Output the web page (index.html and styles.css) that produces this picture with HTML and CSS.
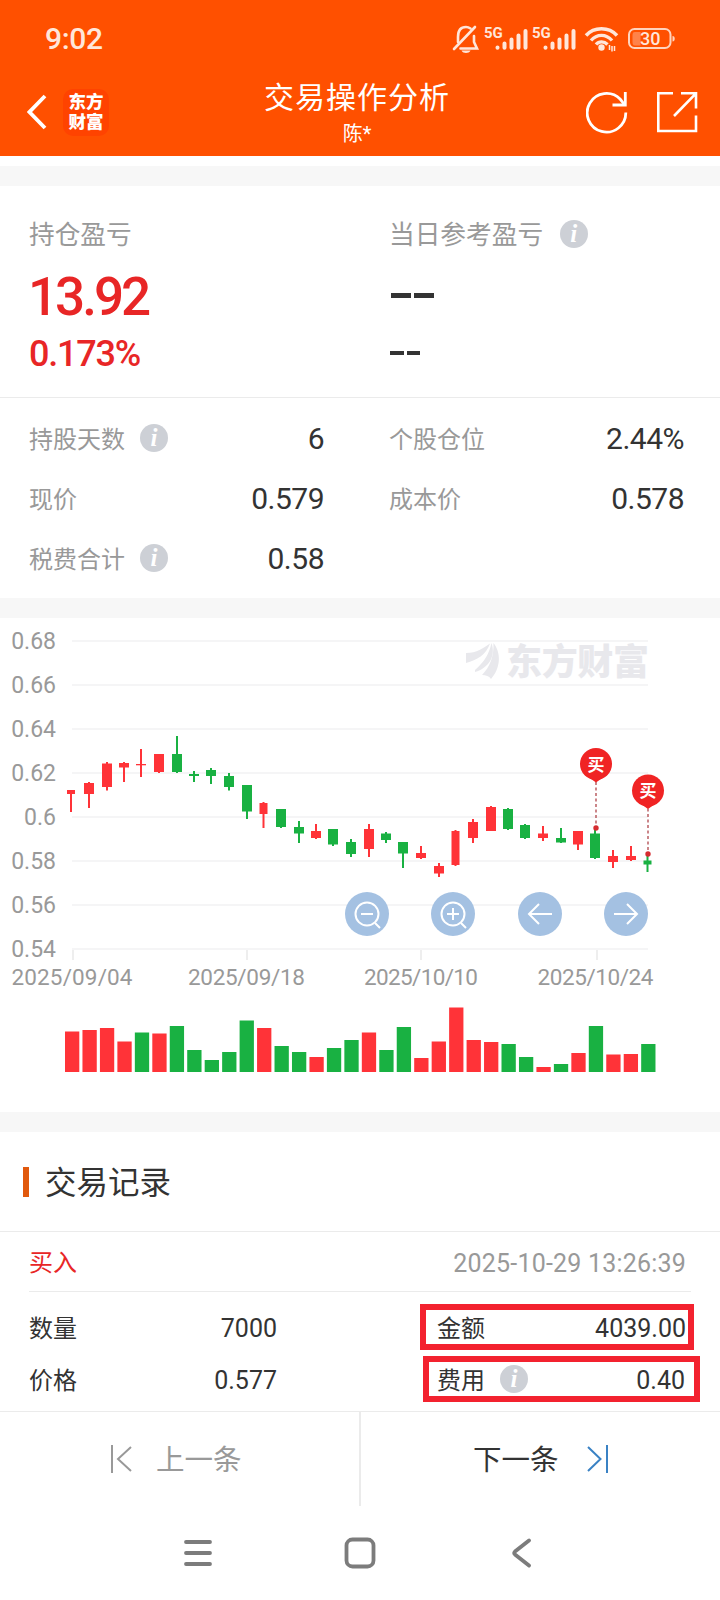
FILE: index.html
```html
<!DOCTYPE html>
<html lang="zh-CN">
<head>
  <meta charset="UTF-8">
  <meta name="viewport" content="width=device-width, initial-scale=1.0">
  <title>交易操作分析</title>
  <link rel="stylesheet" href="styles.css">
</head>
<body>
  <!-- Header -->
  <header class="header">
    <div class="status-bar">
      <span class="time">9:02</span>
      <svg class="status-icons" width="228" height="36" viewBox="450 22 228 36">
        <g fill="none" stroke="#ffe6da" stroke-width="2.6" stroke-linecap="round">
          <path d="M454 49 L475 27"/>
          <path d="M458 42 V37 C458 30 461 27 466 27 C468 27 469 27.500 470.500 28.500"/>
          <path d="M474 36 V42 L477 48.500 H460.500"/>
        </g>
        <path d="M461.500 50.500 H470.500 C469.500 52.300 468 53 466 53 C464 53 462.500 52.300 461.500 50.500 Z" fill="#ffe6da"/>
        <text class="net" x="484" y="37.500">5G</text>
        <g stroke="#ffe6da" stroke-width="4" stroke-linecap="round">
          <path d="M497.500 47.500 V47.700 M504.500 43.500 V47.700 M511.500 39.500 V47.700 M518.500 35.500 V47.700 M525.500 31 V47.700"/>
          <path d="M545.500 47.500 V47.700 M552.500 43.500 V47.700 M559.500 39.500 V47.700 M566.500 35.500 V47.700 M573.500 31 V47.700"/>
        </g>
        <text class="net" x="532" y="37.500">5G</text>
        <g fill="none" stroke="#ffe6da" stroke-width="3.400">
          <path d="M586 35.500 C594 26.500 609 26.500 617 35.500"/>
          <path d="M591 40.500 C597 33.700 606 33.700 612 40.500"/>
          <path d="M596 44.500 C599 41 604 41 607.500 44.500"/>
        </g>
        <circle cx="601.500" cy="47.500" r="3.200" fill="#ffe6da"/>
        <path d="M609.500 50 V45 M612 46 V51.500 M614.500 51 V46" stroke="#ffe6da" stroke-width="1.500"/>
        <rect x="629" y="29" width="41.500" height="19" rx="5.500" fill="none" stroke="#ffd3bd" stroke-width="2"/>
        <path d="M635 32 H640.500 V45.500 H635 C633 45.500 632.500 44 632.500 42 V35.500 C632.500 33 633 32 635 32 Z" fill="#ff824a"/>
        <path d="M672.500 36 C675.500 36 675.500 41.500 672.500 41.500 Z" fill="#ffd3bd"/>
        <text class="battery" x="640" y="45">30</text>
      </svg>
    </div>
    <div class="title-bar">
      <div class="title-left">
        <svg width="20" height="36" viewBox="0 0 20 36"><path d="M18 2 L2.500 18 L18 34" fill="none" stroke="#fff" stroke-width="3.800"/></svg>
        <div class="logo">东方<br>财富</div>
      </div>
      <div class="title-center">
        <h1>交易操作分析</h1>
        <p>陈*</p>
      </div>
      <div class="title-right">
        <svg width="42" height="44" viewBox="0 0 42 44" fill="none" stroke="#fff" stroke-width="2.800">
          <path d="M39.800 22.500 A19.300 19.300 0 1 1 34.300 9.300 L38 14"/>
          <path d="M39.300 2 V15 H26.500"/>
        </svg>
        <svg width="42" height="44" viewBox="0 0 42 44" fill="none" stroke="#fff" stroke-width="2.600">
          <path d="M17 3.300 H2.300 V41 H40 V25.500"/>
          <path d="M25 3.300 H40 V18.500 M39 4.300 L18 26"/>
        </svg>
      </div>
    </div>
  </header>

  <!-- Profit and loss -->
  <section class="profit">
    <div class="profit-col">
      <div class="profit-label"><span>持仓盈亏</span></div>
      <div class="profit-value up">13.92</div>
      <div class="profit-rate up">0.173%</div>
    </div>
    <div class="profit-col">
      <div class="profit-label"><span>当日参考盈亏</span><i class="info">i</i></div>
      <div class="dashes"><b></b><b></b></div>
      <div class="dashes small"><b></b><b></b></div>
    </div>
  </section>

  <!-- Position details -->
  <section class="details">
    <div class="item"><span>持股天数</span><i class="info">i</i><strong>6</strong></div>
    <div class="item"><span>个股仓位</span><strong>2.44%</strong></div>
    <div class="item"><span>现价</span><strong>0.579</strong></div>
    <div class="item"><span>成本价</span><strong>0.578</strong></div>
    <div class="item"><span>税费合计</span><i class="info">i</i><strong>0.58</strong></div>
  </section>

  <!-- Candles and volume -->
  <section class="chart">
    <svg id="kline" width="720" height="494" viewBox="0 618 720 494">
      <g id="axis"></g>
      <g class="watermark">
        <path d="M466 653 C477 653 483 648 490 643.500 C486 655 477 660 466 663 Z"/>
        <path d="M475 670 C485 661 489 654 491.500 643 C496 656 489 668 475 672 Z"/>
        <path d="M482 675 C490 667 494 656 493.500 643 C502 654 500 669 491 679 C489 676 486 675 482 675 Z"/>
        <text x="506" y="675" textLength="143">东方财富</text>
      </g>
      <g id="candles"></g>
      <g id="pins"></g>
      <g id="volume"></g>
    </svg>
    <div class="chart-tools">
      <button type="button"><svg width="44" height="44"><circle cx="22" cy="22" r="11.500"/><path d="M16 22 H28 M30 31 L35 36"/></svg></button>
      <button type="button"><svg width="44" height="44"><circle cx="22" cy="22" r="11.500"/><path d="M16 22 H28 M22 16 V28 M30 31 L35 36"/></svg></button>
      <button type="button"><svg width="44" height="44"><path d="M34 22 H11 M21 12 L11 22 L21 32"/></svg></button>
      <button type="button"><svg width="44" height="44"><path d="M10 22 H33 M23 12 L33 22 L23 32"/></svg></button>
    </div>
  </section>

  <!-- Trade records -->
  <section class="records">
    <h2><span>交易记录</span></h2>
    <div class="record-head">
      <span class="up">买入</span>
      <time>2025-10-29 13:26:39</time>
    </div>
    <div class="record-body">
      <div class="cell"><span>数量</span><strong>7000</strong></div>
      <div class="cell marked"><span>金额</span><strong>4039.00</strong></div>
      <div class="cell"><span>价格</span><strong>0.577</strong></div>
      <div class="cell marked wide"><span>费用</span><i class="info">i</i><strong>0.40</strong></div>
    </div>
  </section>

  <!-- Pager -->
  <div class="pager">
    <div class="prev">
      <svg width="24" height="30" viewBox="0 0 24 30"><path d="M2 1 V29 M21 3 L8 15 L21 27"/></svg>
      <span>上一条</span>
    </div>
    <div class="next">
      <span>下一条</span>
      <svg width="24" height="30" viewBox="0 0 24 30"><path d="M22 1 V29 M3 3 L15.500 15 L3 27"/></svg>
    </div>
  </div>

  <!-- System navigation -->
  <nav class="sys-nav">
    <svg width="30" height="32"><path d="M3 5 H27 M3 16 H27 M3 27 H27"/></svg>
    <svg width="32" height="32"><rect x="2.500" y="2.500" width="27" height="27" rx="6"/></svg>
    <svg width="22" height="32"><path d="M18 3.500 L4 14.500 Q2.500 16 4 17.500 L18 28.500"/></svg>
  </nav>

  <script>
    const RED = '#ff3338';
    const GREEN = '#19b142';

    // [x, wick top, body top, body bottom, wick bottom, color]
    const candles = [
      [71, 790, 790, 794, 812, RED], [89, 782, 783, 794, 808, RED],
      [107, 762, 763.5, 787, 790.5, RED], [124, 762, 763, 767.5, 782, RED],
      [141, 749, 764, 765.3, 777, RED], [159, 754, 754, 772, 773, RED],
      [177, 736, 754, 772, 773, GREEN], [194, 771, 774, 776, 782, GREEN],
      [211, 768, 770, 776, 784, GREEN], [229, 773, 776, 787, 790.5, GREEN],
      [247, 785, 785, 811.5, 819, GREEN], [263.5, 802, 803, 814, 828, RED],
      [281, 809, 809, 827, 828, GREEN], [299, 821, 827, 833.5, 843, GREEN],
      [316, 824, 831, 838, 839, RED], [333, 829, 829, 844.5, 846, GREEN],
      [351, 839, 842, 854, 857, GREEN], [369, 824, 829, 849, 857, RED],
      [386, 832, 833.5, 840, 843, GREEN], [403, 842, 842, 853.5, 868, GREEN],
      [421, 846, 853, 858, 859, RED], [439, 863, 866, 873.5, 877, RED],
      [455.5, 830, 831, 865, 866, RED], [473, 819, 822, 838, 843, RED],
      [491, 806, 807, 831, 831, RED], [508, 808, 809, 829, 830, GREEN],
      [525, 824, 825, 838, 839, GREEN], [543, 826, 833.5, 838, 841, RED],
      [561, 828, 838, 842.5, 843, GREEN], [578, 831, 831, 844.5, 850, RED],
      [595, 829, 833.5, 858, 859, GREEN], [613, 850, 856, 862, 868, RED],
      [631, 846, 856, 860, 861, RED], [647.5, 856, 860.5, 864.5, 872, GREEN]
    ];

    const volumes = [
      40.5, 42, 44, 30.5, 39.5, 38.5, 46, 22, 12, 20, 51.5, 44, 26, 20, 15, 24, 32,
      39.5, 22, 45, 14, 30.5, 64.5, 32, 30, 28, 15, 5, 8, 19, 46, 17.5, 18, 28
    ];
    const volumeColors = 'rrrrgrgggggrggrggrggrrrrrggrgrgrrg';

    // Price grid and labels
    let axis = '';
    ['0.68', '0.66', '0.64', '0.62', '0.6', '0.58', '0.56', '0.54'].forEach((label, i) => {
      const y = 641 + i * 44;
      axis += `<rect x="72" y="${y - 1}" width="576" height="2" fill="#f5f5f6"/>`;
      axis += `<text class="tick" x="56" y="${y + 8}" text-anchor="end">${label}</text>`;
    });
    // [label, tick x, text x, text width]
    [
      ['2025/09/04', 73, 11.5, 121], ['2025/09/18', 247, 188, 117],
      ['2025/10/10', 421, 364, 114], ['2025/10/24', 597, 537.5, 116]
    ].forEach(([label, x, tx, w]) => {
      axis += `<rect x="${x - 1}" y="950" width="2" height="10" fill="#eee"/>`;
      axis += `<text class="tick date" x="${tx}" y="985" textLength="${w}">${label}</text>`;
    });
    document.getElementById('axis').innerHTML = axis;

    // Candles
    document.getElementById('candles').innerHTML = candles.map(([x, top, open, close, bottom, color], i) => {
      const w = [0, 11, 22, 33].includes(i) ? 8 : 10;
      return `<path d="M${x} ${top} V${bottom}" stroke="${color}" stroke-width="2"/>` +
        `<rect x="${x - w / 2}" y="${open}" width="${w}" height="${close - open}" fill="${color}"/>`;
    }).join('');

    // Buy markers
    document.getElementById('pins').innerHTML = [[596, 764, 828], [648, 790.5, 854]].map(([x, y, end]) =>
      `<path d="M${x} ${y + 18} V${end}" stroke="#b0464b" stroke-width="1.3" stroke-dasharray="3 2.5"/>
       <circle cx="${x}" cy="${end}" r="2.7" fill="#d62c30"/>
       <path d="M${x - 12} ${y + 10} L${x} ${y + 18.5} L${x + 12} ${y + 10} Z" fill="#f02424"/>
       <circle cx="${x}" cy="${y}" r="16" fill="#f02424"/>
       <text class="pin" x="${x}" y="${y + 6.5}" text-anchor="middle">买</text>`
    ).join('');

    // Volume bars
    document.getElementById('volume').innerHTML = volumes.map((h, i) =>
      `<rect x="${65 + i * 17.46}" y="${1072 - h}" width="14.3" height="${h}" fill="${volumeColors[i] === 'r' ? RED : GREEN}"/>`
    ).join('');
  </script>
</body>
</html>
```
FILE: styles.css
```css
* {
  box-sizing: border-box;
}

body {
  margin: 0;
  width: 720px;
  height: 1600px;
  overflow: hidden;
  background-color: #fff;
  color: #333;
  font-family: Roboto, "Noto Sans CJK SC", sans-serif;
}

h1, h2, p {
  margin: 0;
  font-weight: 400;
}

svg {
  display: block;
}

strong {
  font-weight: 400;
}

.up {
  color: #e82626;
}

/* Header */
.header {
  height: 156px;
  background-color: #ff5000;
  color: #fff;
}

.status-bar {
  display: flex;
  justify-content: space-between;
  height: 76px;
  padding: 22px 42px 0 45px;
}

.time {
  font-size: 30px;
  line-height: 34px;
  font-weight: 500;
  letter-spacing: -0.3px;
  color: #ffe6da;
}

.net {
  font-size: 15px;
  font-weight: 700;
  fill: #ffe6da;
}

.battery {
  font-size: 18px;
  font-weight: 500;
  fill: #ffe6da;
}

.title-bar {
  display: grid;
  grid-template-columns: 200px 1fr 200px;
  height: 80px;
}

.title-left {
  display: flex;
  align-items: center;
  gap: 16px;
  padding: 0 0 8px 27px;
}

.logo {
  width: 46px;
  height: 47px;
  padding-top: 3px;
  border-radius: 10px;
  background-color: #ff4300;
  font-size: 17.5px;
  font-weight: 900;
  line-height: 20px;
  text-align: center;
}

.title-center {
  text-align: center;
  padding: 1px 6px 0 0;
}

.title-center h1 {
  font-size: 30px;
  line-height: 42px;
  letter-spacing: 1px;
}

.title-center p {
  font-size: 20px;
  line-height: 30px;
}

.title-right {
  display: flex;
  justify-content: flex-end;
  gap: 28px;
  padding: 14px 22px 0 0;
}

/* Profit */
.profit {
  display: flex;
  height: 232px;
  margin-top: 10px;
  border-top: 20px solid #f7f7f7;
  border-bottom: 1px solid #ebebeb;
}

.profit-col {
  width: 360px;
  padding: 30px 0 0 29px;
}

.profit-label {
  display: flex;
  align-items: center;
  height: 36px;
  font-size: 25.7px;
  color: #999;
}

.profit-label span {
  padding-bottom: 3px;
}

.profit-label .info {
  margin-left: 16.5px;
}

.profit-value {
  height: 62px;
  margin: 14px 0 0 -1px;
  font-size: 53px;
  line-height: 62px;
  font-weight: 500;
  letter-spacing: -3px;
}

.profit-rate {
  margin-top: 4px;
  font-size: 36px;
  line-height: 44px;
  font-weight: 500;
  letter-spacing: -1.2px;
}

.dashes {
  display: flex;
  gap: 3px;
  padding: 41px 0 0 2px;
}

.dashes b {
  width: 20px;
  height: 5px;
  background-color: #333;
}

.dashes.small {
  padding: 53px 0 0 1px;
}

.dashes.small b {
  width: 13.5px;
  height: 3.5px;
}

.info {
  width: 28px;
  height: 28px;
  border-radius: 50%;
  background-color: #cdd0d6;
  color: #fff;
  font: italic 700 25px/27px "Liberation Serif", serif;
  text-align: center;
}

/* Details */
.details {
  display: grid;
  grid-template-columns: 360px 360px;
  grid-auto-rows: 60px;
  height: 200px;
  padding-top: 10px;
}

.item {
  display: flex;
  align-items: center;
  padding: 0 36px 0 29px;
  font-size: 24px;
  color: #999;
}

.item span {
  padding-bottom: 2px;
}

.item .info {
  margin-left: 15px;
}

.item strong {
  margin-left: auto;
  font-size: 30px;
  letter-spacing: -0.5px;
  color: #333;
}

/* Chart */
.chart {
  position: relative;
  height: 514px;
  border-top: 20px solid #f7f7f7;
}

.tick {
  font-size: 23px;
  fill: #999;
}

.date {
  font-size: 22.5px;
}

.watermark {
  fill: #e8e8ec;
  font-size: 36px;
  font-weight: 900;
}

.pin {
  font-size: 17px;
  font-weight: 700;
  fill: #fff;
}

.chart-tools {
  position: absolute;
  left: 345px;
  top: 274px;
  width: 303px;
  display: flex;
  justify-content: space-between;
}

.chart-tools button {
  width: 44px;
  height: 44px;
  padding: 0;
  border: none;
  border-radius: 50%;
  background-color: #a4c1e2;
}

.chart-tools svg {
  fill: none;
  stroke: #fff;
  stroke-width: 2;
}

/* Records */
.records {
  height: 299px;
  border-top: 20px solid #f7f7f7;
}

.records h2 {
  display: flex;
  align-items: center;
  gap: 16px;
  height: 100px;
  padding-left: 23px;
  border-bottom: 1px solid #ebebeb;
  font-size: 31.5px;
}

.records h2 span {
  padding-bottom: 3px;
}

.records h2::before {
  content: "";
  width: 6px;
  height: 30px;
  background-color: #e1590d;
}

.record-head {
  display: flex;
  justify-content: space-between;
  align-items: center;
  height: 60px;
  margin: 0 29px;
  padding-right: 5px;
  border-bottom: 1px solid #ebebeb;
  font-size: 24px;
}

.record-head span {
  padding-bottom: 2px;
}

.record-head time {
  padding-top: 3px;
  font-size: 25px;
  letter-spacing: 0.2px;
  color: #999;
}

.record-body {
  display: grid;
  grid-template-columns: 391px 280px;
  row-gap: 6px;
  padding: 12px 0 0 29px;
}

.cell {
  display: flex;
  align-items: center;
  width: 248px;
  height: 46px;
  font-size: 24px;
}

.cell span {
  padding-bottom: 2px;
}

.cell strong {
  margin-left: auto;
  padding-top: 2px;
  font-size: 25px;
}

.cell .info {
  margin-left: 15px;
}

.cell.marked {
  width: 274px;
  padding: 0 2px 0 11px;
  border: 6.5px solid #f3222f;
}

.cell.marked.wide {
  width: 277px;
  margin-left: 3px;
  padding: 0 9px 0 8px;
}

/* Pager */
.pager {
  display: grid;
  grid-template-columns: 361px 359px;
  height: 95px;
  border-top: 1px solid #ebebeb;
  font-size: 28.5px;
}

.pager svg {
  fill: none;
  stroke-width: 2;
}

.pager span {
  padding-bottom: 4px;
}

.prev,
.next {
  display: flex;
  align-items: center;
}

.prev {
  gap: 22px;
  padding-left: 110px;
  border-right: 2px solid #ebebeb;
  color: #999;
}

.prev svg {
  stroke: #999;
}

.next {
  gap: 26px;
  padding-left: 112px;
}

.next svg {
  stroke: #3a82c4;
}

/* System navigation */
.sys-nav {
  display: grid;
  grid-template-columns: 161px 167px 22px;
  align-items: center;
  height: 94px;
  padding-left: 183px;
}

.sys-nav svg {
  fill: none;
  stroke: #7c7c7c;
  stroke-width: 3.8;
  stroke-linecap: round;
}
```
